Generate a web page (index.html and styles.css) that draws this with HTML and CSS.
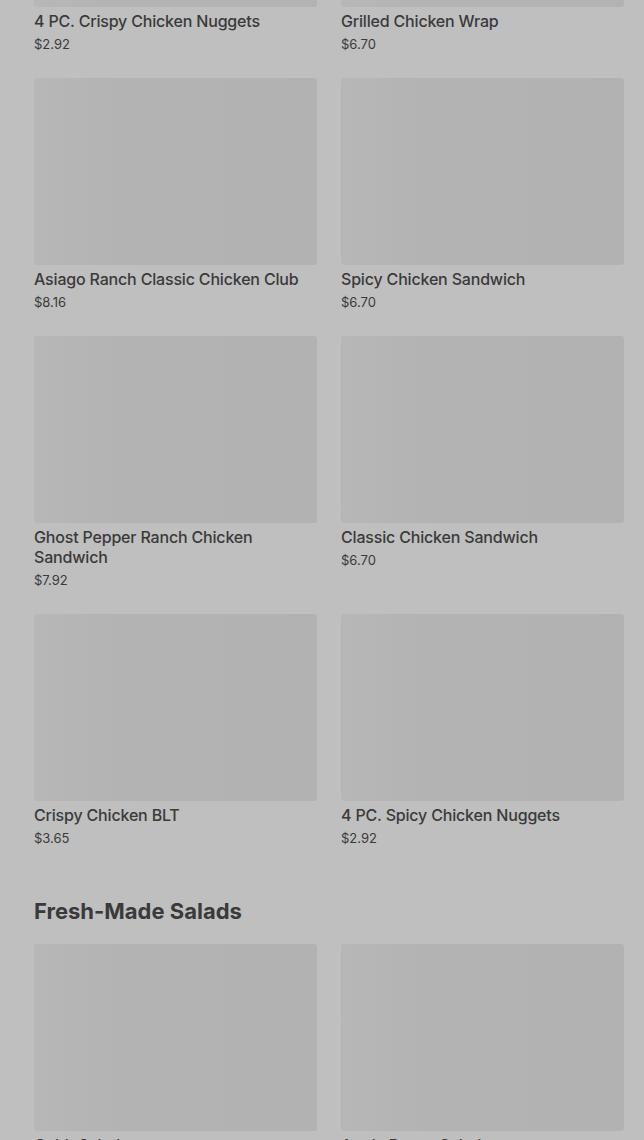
FILE: index.html
```html
<!DOCTYPE html>
<html lang="en">
<head>
    <meta charset="UTF-8">
    <title>Menu</title>
    <link rel="stylesheet" href="styles.css">
</head>
<body>
<div class="menu">
    <section class="category">
        <div class="grid">
            <div class="item">
                <div class="photo"></div>
                <h3>4 PC. Crispy Chicken Nuggets</h3>
                <p class="price">$2.92</p>
            </div>
            <div class="item">
                <div class="photo"></div>
                <h3>Grilled Chicken Wrap</h3>
                <p class="price">$6.70</p>
            </div>
            <div class="item">
                <div class="photo"></div>
                <h3>Asiago Ranch Classic Chicken Club</h3>
                <p class="price">$8.16</p>
            </div>
            <div class="item">
                <div class="photo"></div>
                <h3>Spicy Chicken Sandwich</h3>
                <p class="price">$6.70</p>
            </div>
            <div class="item">
                <div class="photo"></div>
                <h3>Ghost Pepper Ranch Chicken Sandwich</h3>
                <p class="price">$7.92</p>
            </div>
            <div class="item">
                <div class="photo"></div>
                <h3>Classic Chicken Sandwich</h3>
                <p class="price">$6.70</p>
            </div>
            <div class="item">
                <div class="photo"></div>
                <h3>Crispy Chicken BLT</h3>
                <p class="price">$3.65</p>
            </div>
            <div class="item">
                <div class="photo"></div>
                <h3>4 PC. Spicy Chicken Nuggets</h3>
                <p class="price">$2.92</p>
            </div>
        </div>
    </section>

    <section class="category">
        <h2>Fresh-Made Salads</h2>
        <div class="grid">
            <div class="item">
                <div class="photo"></div>
                <h3>Cobb Salad</h3>
                <p class="price">$8.99</p>
            </div>
            <div class="item">
                <div class="photo"></div>
                <h3>Apple Pecan Salad</h3>
                <p class="price">$8.99</p>
            </div>
        </div>
    </section>
</div>
</body>
</html>
```

FILE: styles.css
```css
* { box-sizing: border-box; }

body {
    margin: 0;
    padding: 0;
    background: #bfbfbf;
    font-family: Inter, "Noto Sans", sans-serif;
    color: #3a3a3a;
    overflow: hidden;
}

.menu {
    margin-top: -180px;
    padding: 0 20px 40px 34px;
}

.category + .category {
    margin-top: 50px;
}

h2 {
    margin: 0 0 19px;
    font-size: 22px;
    line-height: 28px;
    font-weight: 700;
}

.grid {
    display: grid;
    grid-template-columns: 1fr 1fr;
    column-gap: 24px;
    row-gap: 25px;
}

.photo {
    height: 187px;
    border-radius: 3px;
    background: linear-gradient(to right, #b7b7b7 0, #b3b3b3 30%, #b2b2b2 100%);
}

.item h3 {
    margin: 4px 0 0;
    font-size: 16px;
    line-height: 20px;
    font-weight: 500;
    letter-spacing: -0.18px;
}

.price {
    margin: 4px 0 0;
    font-size: 13px;
    line-height: 18px;
}
```
